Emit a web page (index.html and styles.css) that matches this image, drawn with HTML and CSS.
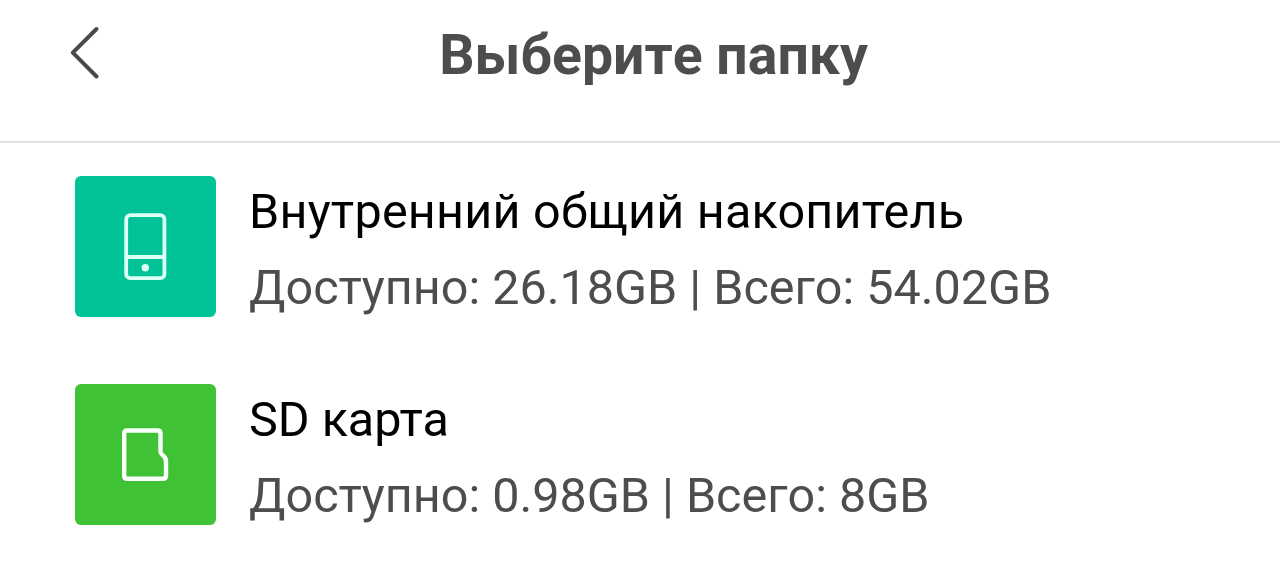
FILE: index.html
```html
<!DOCTYPE html>
<html lang="ru">

<head>
    <meta charset="utf-8">
    <title>Выберите папку</title>
    <meta name="viewport" content="width=device-width, initial-scale=1">
    <link rel="stylesheet" href="styles.css">
</head>

<body>
    <header class="header">
        <button type="button" class="back-btn">
            <svg width="32" height="56" viewBox="0 0 32 56">
                <path d="M27.5 5L3.8 28.7L27.5 52.5" />
            </svg>
        </button>
        <h1>Выберите папку</h1>
    </header>

    <main class="storage-list">
        <div class="storage">
            <div class="storage-icon internal">
                <svg width="141" height="141" viewBox="0 0 141 141">
                    <rect x="51.2" y="39.2" width="38.2" height="63" rx="4" />
                    <path d="M51.2 81H89.4" />
                    <circle class="dot" cx="70.3" cy="91.7" r="3.7" />
                </svg>
            </div>
            <div class="storage-info">
                <div class="storage-name">Внутренний общий накопитель</div>
                <div class="storage-space">Доступно: 26.18GB | Всего: 54.02GB</div>
            </div>
        </div>

        <div class="storage">
            <div class="storage-icon sd-card">
                <svg width="141" height="141" viewBox="0 0 141 141">
                    <path d="M52.2 46.5H82.5Q85.5 46.5 85.5 49.5V67.5Q85.5 69.5 87 70.5Q91 73 91 77V91.8Q91 94.8 88 94.8H52.2Q49.2 94.8 49.2 91.8V49.5Q49.2 46.5 52.2 46.5Z" />
                </svg>
            </div>
            <div class="storage-info">
                <div class="storage-name">SD карта</div>
                <div class="storage-space">Доступно: 0.98GB | Всего: 8GB</div>
            </div>
        </div>
    </main>
</body>

</html>
```

FILE: styles.css
```css
* {
    box-sizing: border-box;
    margin: 0;
    padding: 0;
}

body {
    font-family: Roboto, sans-serif;
    font-kerning: none;
    background: #fff;
}

.header {
    display: grid;
    grid-template-columns: 101px 1fr 74px;
    height: 143px;
    padding-top: 24px;
    border-bottom: 2px solid #e0e0e0;
}

.back-btn {
    height: 56px;
    padding-left: 69px;
    border: none;
    background: none;
}

.back-btn svg {
    display: block;
}

svg {
    fill: none;
    stroke: #4a4a4a;
    stroke-width: 4;
    stroke-linecap: round;
    stroke-linejoin: round;
}

h1 {
    font-size: 55.4px;
    font-weight: 700;
    line-height: 64px;
    text-align: center;
    color: #4d4d4d;
}

.storage-list {
    display: flex;
    flex-direction: column;
    gap: 56px;
    padding: 33px 75px 0;
}

.storage {
    display: flex;
    gap: 33px;
}

.storage-icon {
    width: 141px;
    height: 141px;
    border-radius: 6px;
}

.storage-icon svg {
    display: block;
}

.internal {
    background: #00c297;
}

.internal svg {
    stroke: #dcfff6;
    stroke-width: 3.8;
}

.internal .dot {
    fill: #dcfff6;
    stroke: none;
}

.sd-card {
    background: #3fc235;
}

.sd-card svg {
    stroke: #fbfffa;
    stroke-width: 4.4;
}

.storage-name,
.storage-space {
    font-size: 48.5px;
    white-space: nowrap;
}

.storage-name {
    font-kerning: normal;
    line-height: 72px;
    color: #000;
}

.internal + .storage-info .storage-name {
    letter-spacing: 0.24px;
}

.storage-space {
    line-height: 80px;
    color: #4d4d4d;
}
```
